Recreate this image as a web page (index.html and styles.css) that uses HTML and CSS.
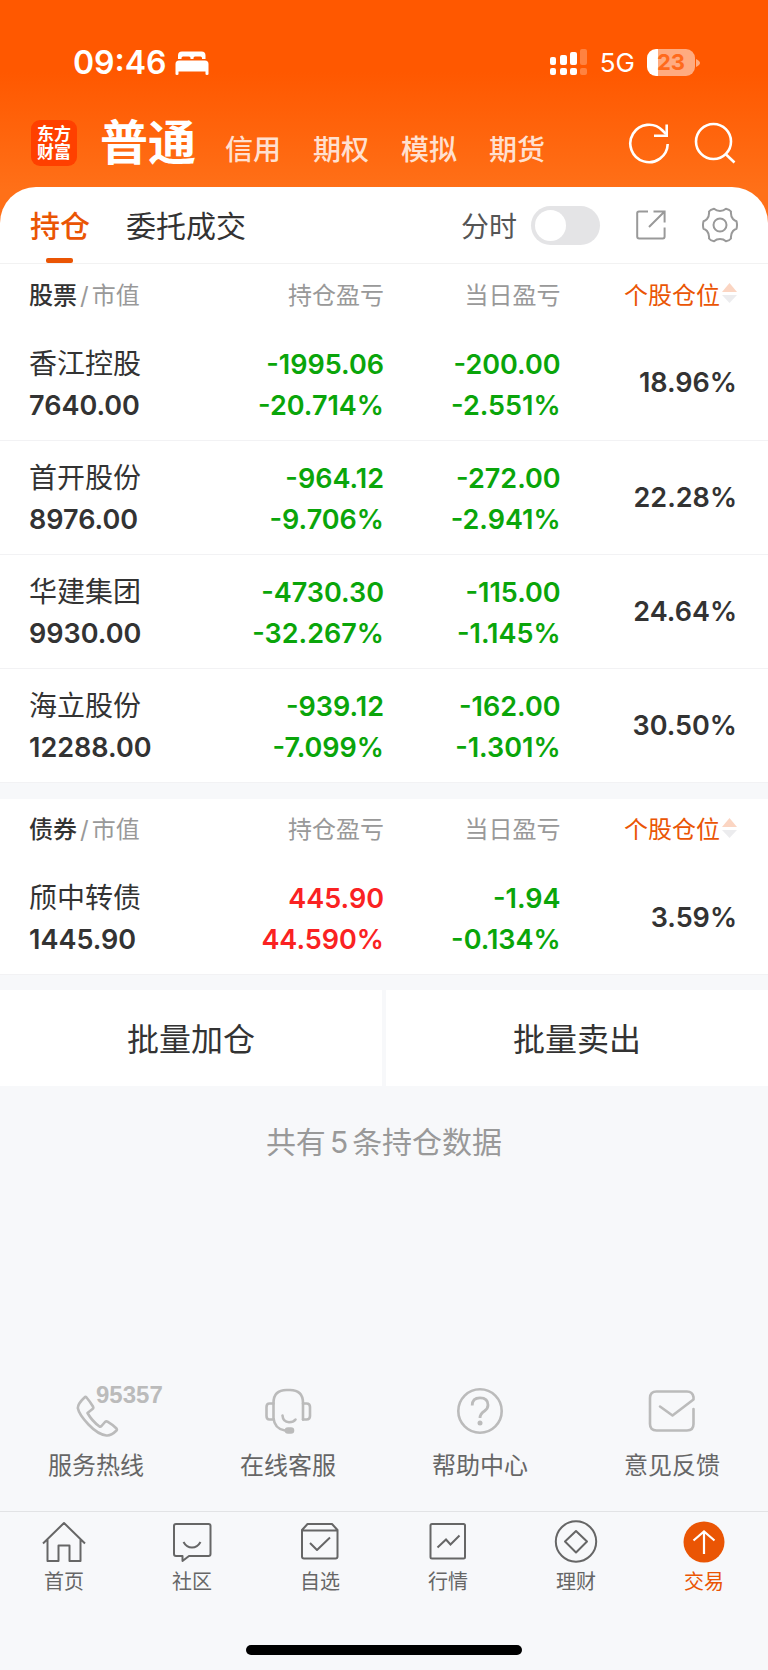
FILE: index.html
```html
<!DOCTYPE html>
<html lang="zh-CN">
<head>
  <meta charset="utf-8">
  <meta name="viewport" content="width=device-width, initial-scale=1">
  <title>持仓</title>
  <link rel="stylesheet" href="styles.css">
</head>
<body>
  <div class="page">
    <header class="top">
      <div class="status">
        <span class="time">09:46</span>
        <svg class="bed" width="34" height="24" viewBox="0 0 34 24" fill="#fff">
          <path d="M3 8V4.500Q3 .5 7 .5H26.500Q30.500 .5 30.500 4.500V8H27V7Q27 5.500 25.500 5.500H20Q18.500 5.500 18.500 7V8H15.500V7Q15.500 5.500 14 5.500H8Q6.500 5.500 6.500 7V8Z"/>
          <path d="M.5 23V13Q.5 9.500 4 9.500H30Q33.500 9.500 33.500 13V23Q33.500 24 32 24Q30.500 24 30.500 23V20.500H3.500V23Q3.500 24 2 24Q.5 24 .5 23Z"/>
        </svg>
        <svg class="signal" width="38" height="27" viewBox="0 0 38 27" fill="#fff">
          <rect x="0" y="8" width="6" height="8" rx="2"/>
          <rect x="10" y="6" width="7" height="10" rx="2"/>
          <rect x="20" y="3" width="7" height="13" rx="2"/>
          <rect x="30" y="0" width="7" height="16" rx="2" opacity=".25"/>
          <rect x="0" y="19" width="6" height="7" rx="2"/>
          <rect x="10" y="19" width="7" height="7" rx="2"/>
          <rect x="20" y="19" width="7" height="7" rx="2"/>
          <rect x="30" y="19" width="7" height="7" rx="2" opacity=".25"/>
        </svg>
        <span class="network">5G</span>
        <span class="battery">23</span>
        <svg class="nub" width="4" height="8" viewBox="0 0 4 8"><path d="M0 0Q4 2 4 4Q4 6 0 8Z" fill="#fff" opacity=".5"/></svg>
      </div>

      <div class="header">
        <div class="logo">东方<br>财富</div>
        <nav class="accounts">
          <a href="#" class="active">普通</a>
          <a href="#">信用</a>
          <a href="#">期权</a>
          <a href="#">模拟</a>
          <a href="#">期货</a>
        </nav>
        <button class="icon-btn refresh" aria-label="刷新">
          <svg width="42" height="42" viewBox="0 0 42 42" fill="none" stroke="#fff" stroke-width="2.600">
            <path d="M39.700 22A18.700 18.700 0 1 1 34.500 8.500L38 12"/>
            <path d="M38.700 2.500V13.700H26"/>
          </svg>
        </button>
        <button class="icon-btn" aria-label="搜索">
          <svg width="42" height="42" viewBox="0 0 42 42" fill="none" stroke="#fff" stroke-width="2.600">
            <circle cx="19.500" cy="19.500" r="17.500"/>
            <path d="M31.500 32L40.500 40.500"/>
          </svg>
        </button>
      </div>
    </header>

    <main class="card">
      <div class="tabs">
        <button class="tab active">持仓</button>
        <button class="tab">委托成交</button>
        <label class="minute" for="minute">分时</label>
        <input class="switch" type="checkbox" role="switch" id="minute">
        <button class="icon-btn share" aria-label="分享">
          <svg width="30" height="30" viewBox="0 0 30 30" fill="none" stroke="#999" stroke-width="2">
            <path d="M12 1.500H3Q1.200 1.500 1.200 3.300V26.500Q1.200 28.500 3.200 28.500H26.800Q28.600 28.500 28.600 26.500V17.500"/>
            <path d="M17.500 1.500H28.600V12.500M28.300 1.800L13 17"/>
          </svg>
        </button>
        <button class="icon-btn" aria-label="设置">
          <svg width="36" height="36" viewBox="0 0 36 36" fill="none" stroke="#999" stroke-width="2" stroke-linejoin="round">
            <path d="M12 1.800Q14.500 4 18 4Q21.500 4 24 1.800Q27.500 2.500 29 4.500Q28.500 9 31 12Q32.500 13.700 34.500 14.300Q35.500 18 34.500 21.700Q32.500 22.300 31 24Q28.500 27 29 31.500Q27.500 33.500 24 34.200Q21.500 32 18 32Q14.500 32 12 34.200Q8.500 33.500 7 31.500Q7.500 27 5 24Q3.500 22.300 1.500 21.700Q.5 18 1.500 14.300Q3.500 13.700 5 12Q7.500 9 7 4.500Q8.500 2.500 12 1.800Z"/>
            <circle cx="18" cy="18" r="6.500"/>
          </svg>
        </button>
      </div>

      <table class="holdings">
        <thead>
          <tr>
            <th><b>股票</b><i>/</i>市值</th>
            <th>持仓盈亏</th>
            <th>当日盈亏</th>
            <th>
              <button class="sort">个股仓位<svg width="15" height="22" viewBox="0 0 15 22"><path d="M7.500 1L15 10H0Z" fill="#fbd5c2"/><path d="M0 13H15L7.500 21Z" fill="#ececee"/></svg></button>
            </th>
          </tr>
        </thead>
        <tbody>
          <tr>
            <td><span class="name">香江控股</span>7640.00</td>
            <td class="down">-1995.06<br>-20.714%</td>
            <td class="down">-200.00<br>-2.551%</td>
            <td>18.96%</td>
          </tr>
          <tr>
            <td><span class="name">首开股份</span>8976.00</td>
            <td class="down">-964.12<br>-9.706%</td>
            <td class="down">-272.00<br>-2.941%</td>
            <td>22.28%</td>
          </tr>
          <tr>
            <td><span class="name">华建集团</span>9930.00</td>
            <td class="down">-4730.30<br>-32.267%</td>
            <td class="down">-115.00<br>-1.145%</td>
            <td>24.64%</td>
          </tr>
          <tr>
            <td><span class="name">海立股份</span>12288.00</td>
            <td class="down">-939.12<br>-7.099%</td>
            <td class="down">-162.00<br>-1.301%</td>
            <td>30.50%</td>
          </tr>
        </tbody>
      </table>
    </main>

    <section class="bonds">
      <table class="holdings">
        <thead>
          <tr>
            <th><b>债券</b><i>/</i>市值</th>
            <th>持仓盈亏</th>
            <th>当日盈亏</th>
            <th>
              <button class="sort">个股仓位<svg width="15" height="22" viewBox="0 0 15 22"><path d="M7.500 1L15 10H0Z" fill="#fbd5c2"/><path d="M0 13H15L7.500 21Z" fill="#ececee"/></svg></button>
            </th>
          </tr>
        </thead>
        <tbody>
          <tr>
            <td><span class="name">颀中转债</span>1445.90</td>
            <td class="up">445.90<br>44.590%</td>
            <td class="down">-1.94<br>-0.134%</td>
            <td>3.59%</td>
          </tr>
        </tbody>
      </table>
    </section>

    <div class="batch">
      <button>批量加仓</button>
      <button>批量卖出</button>
    </div>

    <p class="total">共有<span>5</span>条持仓数据</p>

    <div class="services">
      <a href="#">
        <span class="service-icon">
          <svg width="52" height="52" viewBox="0 0 52 52" fill="none" stroke="#bbb" stroke-width="2.600" stroke-linejoin="round">
            <path d="M14.500 12.500Q15.500 11.500 16.500 12.500Q20 16.500 23 21.500Q23.800 23 22.500 24L17.500 28Q22 36 29.500 41.500Q30.500 42 31.500 41L35 37Q36.200 36 37.500 36.600Q42.500 39.500 46.500 43.500Q47.300 44.500 46.500 45.500Q41 51 36.500 50.500Q28 49.500 18.500 39.500Q9 29.500 7.800 23Q8 18.500 14.500 12.500Z"/>
          </svg>
          <span class="hotline">95357</span>
        </span>
        服务热线
      </a>
      <a href="#">
        <span class="service-icon">
          <svg width="52" height="52" viewBox="0 0 52 52" fill="none" stroke="#bbb" stroke-width="2.600" stroke-linecap="round" stroke-linejoin="round">
            <path d="M41 34.500V18Q41 5 28 5H24.500Q11.500 5 11.500 18V33Q12.500 44 23 45.500"/>
            <path d="M41 18.500H44.500Q48 18.500 48 22V31Q48 34.500 44.500 34.500H41"/>
            <path d="M11.500 18.500H7.500Q4.500 18.500 4.500 22V31Q4.500 34.500 7.500 34.500H11.500"/>
            <path d="M20.500 30.500Q21 37 27 37.200Q31.500 37.200 33.500 34.500"/>
            <rect x="24" y="43.500" width="7" height="4" rx="2" fill="#bbb"/>
          </svg>
        </span>
        在线客服
      </a>
      <a href="#">
        <span class="service-icon">
          <svg width="52" height="52" viewBox="0 0 52 52" fill="none" stroke="#bbb" stroke-width="2.600">
            <circle cx="26" cy="26" r="21.700"/>
            <path d="M18.200 20.500Q18.200 12.800 26 12.800Q34 12.800 34 20Q34 23.500 30.500 26Q26 29 26 33" stroke-width="2.800"/>
            <circle cx="26" cy="38" r="2.500" fill="#bbb" stroke="none"/>
          </svg>
        </span>
        帮助中心
      </a>
      <a href="#">
        <span class="service-icon">
          <svg width="52" height="52" viewBox="0 0 52 52" fill="none" stroke="#bbb" stroke-width="2.600" stroke-linecap="round" stroke-linejoin="round">
            <path d="M47.500 24V39Q47.500 45.500 41 45.500H10.500Q4 45.500 4 39V13Q4 6.500 10.500 6.500H41Q46.500 6.500 47.500 12V14.500L26.500 30.500L14 21.500"/>
          </svg>
        </span>
        意见反馈
      </a>
    </div>

    <footer class="bottom">
      <nav class="tabbar">
        <a href="#">
          <svg width="44" height="44" viewBox="0 0 44 44" fill="none" stroke="#666" stroke-width="2" stroke-linejoin="round">
            <path d="M1 23.500L22 3L43 23.500M5.500 19.500V41H16.500V25.500H27.500V41H38.500V19.500"/>
          </svg>
          首页
        </a>
        <a href="#">
          <svg width="44" height="44" viewBox="0 0 44 44" fill="none" stroke="#666" stroke-width="2" stroke-linejoin="round">
            <path d="M6 4H38.500Q40.500 4 40.500 6V34Q40.500 36 38.500 36H19L12.500 41V36H6Q4 36 4 34V6Q4 4 6 4Z"/>
            <path d="M13.500 22Q16.500 27.500 22 27.500Q27.500 27.500 30.500 22"/>
          </svg>
          社区
        </a>
        <a href="#">
          <svg width="44" height="44" viewBox="0 0 44 44" fill="none" stroke="#666" stroke-width="2" stroke-linejoin="round">
            <path d="M4 10L9.500 4H34L39.500 10V36.500Q39.500 38.500 37.500 38.500H6Q4 38.500 4 36.500ZM4 10.500H39.500"/>
            <path d="M12 23L19 30L32 17.500"/>
          </svg>
          自选
        </a>
        <a href="#">
          <svg width="44" height="44" viewBox="0 0 44 44" fill="none" stroke="#666" stroke-width="2">
            <rect x="4.500" y="4" width="34.500" height="34.500" rx="1.500"/>
            <path d="M11.500 27.500L20 19.500L24.500 24.500L33.500 15.500"/>
          </svg>
          行情
        </a>
        <a href="#">
          <svg width="44" height="44" viewBox="0 0 44 44" fill="none" stroke="#666" stroke-width="2" stroke-linejoin="round">
            <circle cx="22" cy="21.500" r="20.200"/>
            <path d="M22 11L33 21.500L22 32.500L11 21.500Z"/>
          </svg>
          理财
        </a>
        <a href="#" class="active">
          <svg width="44" height="44" viewBox="0 0 44 44" fill="none" stroke="#fff" stroke-width="2.200">
            <circle cx="22" cy="22" r="20.500" fill="#ea5504" stroke="none"/>
            <path d="M22 34V11.500M11.500 20.500L22 11.500L32.500 20.500"/>
          </svg>
          交易
        </a>
      </nav>
      <div class="home-bar"></div>
    </footer>
  </div>
</body>
</html>
```
FILE: styles.css
```css
* {
    box-sizing: border-box;
}
body {
    margin: 0;
    font-family: Inter, "Noto Sans CJK SC", sans-serif;
    background-color: #f7f8fa;
    color: #333;
}
a {
    color: inherit;
    text-decoration: none;
}
button {
    padding: 0;
    border: none;
    background: none;
    color: inherit;
    font: inherit;
    cursor: pointer;
}
svg {
    display: block;
    flex: none;
}
.page {
    display: flex;
    flex-direction: column;
    min-height: 100vh;
}

/* header */
.top {
    padding: 40px 32px 40px 31px;
    background: linear-gradient(#ff5800 0, #ff5800 72px, #ff7018 190px);
    color: #fff;
}
.status {
    display: flex;
    align-items: center;
    height: 45px;
    padding: 0 36px 0 42px;
}
.time {
    font-size: 32px;
    font-weight: 600;
}
.bed {
    margin-left: 8px;
}
.signal {
    margin-left: auto;
}
.network {
    margin: 0 12px;
    font-size: 26px;
}
.battery {
    width: 48px;
    border-radius: 9px;
    background: linear-gradient(90deg, #fff 11px, #ffab80 11px);
    color: #ff6a1c;
    font-size: 22px;
    font-weight: 700;
    line-height: 27px;
    text-align: center;
}
.nub {
    margin-left: 1px;
}
.header {
    display: flex;
    align-items: center;
    height: 116px;
    margin-bottom: -14px;
}
.logo {
    width: 46px;
    padding: 5px 0;
    border-radius: 9px;
    background-color: #ff4000;
    font-size: 17px;
    font-weight: 700;
    line-height: 18px;
    text-align: center;
}
.accounts {
    display: flex;
    flex: 1;
    align-items: baseline;
    gap: 32px;
    margin-left: 23px;
    font-size: 28px;
    font-weight: 500;
}
.accounts a {
    color: #ffe0d0;
}
.accounts .active {
    margin-right: -3px;
    color: #fff;
    font-size: 48px;
    font-weight: 700;
    line-height: 62px;
}
.refresh {
    margin-right: 24px;
}

/* holdings */
.card {
    margin-top: -40px;
    border-radius: 36px 36px 0 0;
    background-color: #fff;
}
.tabs {
    display: flex;
    align-items: center;
    height: 77px;
    padding: 0 30px;
    border-bottom: 1px solid #f2f2f2;
}
.tab {
    position: relative;
    height: 76px;
    padding-bottom: 2px;
    margin-right: 36px;
    font-size: 30px;
}
.tab.active {
    color: #ea5504;
    font-weight: 500;
}
.tab.active::after {
    content: "";
    position: absolute;
    bottom: 0;
    left: 16px;
    width: 27px;
    height: 5px;
    border-radius: 2px;
    background-color: #ea5504;
}
.minute {
    margin: 0 14px 0 auto;
    color: #555;
    font-size: 28px;
}
.switch {
    appearance: none;
    width: 69px;
    height: 39px;
    margin: 0;
    padding: 4px;
    border-radius: 20px;
    background-color: #e4e4e6;
}
.switch::before {
    content: "";
    display: block;
    width: 31px;
    height: 31px;
    border-radius: 50%;
    background-color: #fff;
}
.switch:checked {
    background-color: #ea5504;
}
.switch:checked::before {
    margin-left: auto;
}
.share {
    margin: 0 36px;
}
.holdings {
    width: 100%;
    border-collapse: collapse;
    table-layout: fixed;
}
.holdings th {
    width: 23%;
    height: 62px;
    padding: 0 0 4px;
    color: #999;
    font-size: 24px;
    font-weight: 400;
    text-align: right;
    white-space: nowrap;
}
.holdings th b {
    color: #333;
    font-weight: 500;
}
.holdings th i {
    margin: 0 3px;
    font-style: normal;
}
.holdings th:first-child,
.holdings th:last-child {
    width: 27%;
}
.holdings td {
    height: 114px;
    padding: 4px 0 0;
    border-bottom: 1px solid #f2f2f4;
    font-size: 27px;
    font-weight: 600;
    line-height: 41px;
    text-align: right;
}
.holdings td:last-child {
    padding-top: 0;
}
.holdings tr > :first-child {
    padding-left: 29px;
    text-align: left;
}
.holdings tr > :last-child {
    padding-right: 31px;
}
.name {
    display: block;
    font-size: 28px;
    font-weight: 400;
}
.holdings .down {
    color: #0aa50a;
}
.holdings .up {
    color: #fa2222;
}
.sort {
    display: inline-flex;
    align-items: center;
    gap: 2px;
    color: #ea5504;
}
.bonds {
    margin-top: 16px;
    background-color: #fff;
}
.batch {
    display: flex;
    gap: 4px;
    margin-top: 15px;
}
.batch button {
    flex: 1;
    height: 96px;
    padding-bottom: 2px;
    background-color: #fff;
    font-size: 32px;
}
.total {
    margin: 34px 0;
    color: #999;
    font-size: 30px;
    line-height: 44px;
    text-align: center;
}
.total span {
    margin: 0 4px;
}

/* service links */
.services {
    display: flex;
    margin-top: auto;
    padding-bottom: 28px;
    color: #666;
    font-size: 24px;
    line-height: 34px;
}
.services a {
    display: flex;
    flex: 1;
    flex-direction: column;
    align-items: center;
    gap: 12px;
}
.service-icon {
    position: relative;
}
.hotline {
    position: absolute;
    top: -2px;
    left: 26px;
    color: #bbb;
    font-family: "Liberation Sans", sans-serif;
    font-size: 24px;
    font-weight: 700;
    line-height: 24px;
}

/* bottom bar */
.bottom {
    padding-bottom: 15px;
    border-top: 1px solid #e2e3e5;
}
.tabbar {
    display: flex;
    padding-top: 8px;
    color: #666;
    font-size: 20px;
    line-height: 28px;
}
.tabbar a {
    display: flex;
    flex: 1;
    flex-direction: column;
    align-items: center;
    gap: 4px;
}
.tabbar .active {
    color: #ea5504;
}
.home-bar {
    width: 36%;
    height: 10px;
    margin: 49px auto 0;
    border-radius: 5px;
    background-color: #000;
}
```
